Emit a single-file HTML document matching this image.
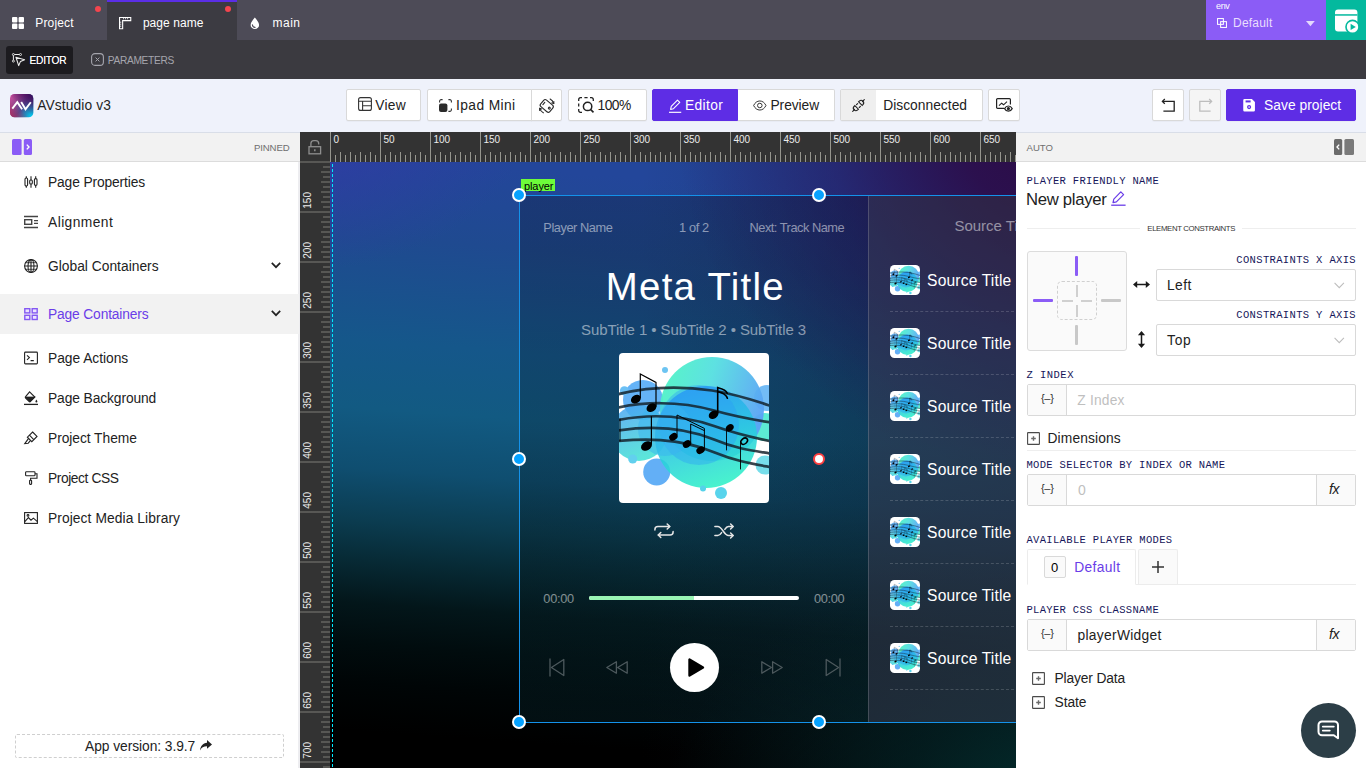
<!DOCTYPE html>
<html lang="en">
<head>
<meta charset="utf-8">
<title>AVstudio v3</title>
<style>
*{box-sizing:border-box;margin:0;padding:0}
html,body{width:1366px;height:768px;overflow:hidden;background:#fff}
body{font-family:"Liberation Sans",sans-serif;color:#222;position:relative;font-size:14px}
.abs{position:absolute}
svg{display:block;overflow:visible}
.t{position:absolute;white-space:nowrap;line-height:1}
/* ---------- top bar ---------- */
#top{position:absolute;left:0;top:0;width:1366px;height:40px;background:#4d4b57}
#top .tab{position:absolute;top:0;height:40px;color:#fff}
#top .tab.active{background:#3c3b42;border-top:2px solid #5b2ee6}
.dot{position:absolute;width:6px;height:6px;border-radius:50%;background:#f4454e}
#env{position:absolute;left:1206px;top:0;width:120px;height:40px;background:#8b5cf6;color:#fff}
#run{position:absolute;left:1326px;top:0;width:40px;height:40px;background:#04b99e}
/* ---------- second bar ---------- */
#sub{position:absolute;left:0;top:40px;width:1366px;height:39px;background:#3b3a40}
#edbtn{position:absolute;left:6px;top:6px;width:67px;height:28px;background:#1c1b1f;border-radius:3px}
/* ---------- toolbar ---------- */
#bar{position:absolute;left:0;top:79px;width:1366px;height:54px;background:#eff2fb;border-bottom:1px solid #d9dee8}
.btn{position:absolute;top:10px;height:32px;background:#fff;border:1px solid #d9d9d9;border-radius:2px;box-shadow:0 1px 1px rgba(0,0,0,.03)}
.btn.pri{background:#5e2de5;border-color:#5e2de5;color:#fff}

/* ---------- left panel ---------- */
#left{position:absolute;left:0;top:133px;width:300px;height:635px;background:#fff;box-shadow:inset -2px 0 0 #ededf0}
.phead{position:absolute;left:0;top:0;width:100%;height:29px;background:#f2f2f2;border-bottom:1px solid #dcdcdc}
.mi{position:absolute;left:0;width:299px;height:40px}
.mi .t{left:48px;top:12px;font-size:14.5px;color:#222}
.mi svg{position:absolute;left:24px;top:13px}
.mi.sel{background:#f2f2f2}
.mi.sel .t{color:#6a3de8}

/* ---------- right panel ---------- */
#right{position:absolute;left:1016px;top:133px;width:350px;height:635px;background:#fff}
.lab{position:absolute;white-space:nowrap;line-height:1;font-family:"Liberation Mono",monospace;font-size:10px;color:#16165a;letter-spacing:.55px}
.box{position:absolute;border:1px solid #d9d9d9;border-radius:2px;background:#fff}
.addon{position:absolute;top:0;height:100%;background:#fafafa}
.hl{position:absolute;height:1px;background:#eee}

/* ---------- canvas ---------- */
#cv{position:absolute;left:300px;top:132px;width:716px;height:636px;background:#333;overflow:hidden}
#rt{position:absolute;left:30px;top:0;width:700px;height:30px;
 background:
  linear-gradient(90deg,#96968e 0 1px,transparent 1px) 0 0/50px 30px repeat-x,
  linear-gradient(90deg,#96968e 0 1px,transparent 1px) 0 20px/10px 10px repeat-x,
  linear-gradient(90deg,#96968e 0 1px,transparent 1px) 5px 23px/10px 7px repeat-x}
#rl{position:absolute;left:0;top:29px;width:30px;height:620px;
 background:
  linear-gradient(180deg,rgba(142,141,134,.4) 0 2px,transparent 2px) 0 0/21px 50px repeat-y,
  linear-gradient(180deg,rgba(142,141,134,.4) 0 2px,transparent 2px) 21px 0/9px 10px repeat-y,
  linear-gradient(180deg,rgba(142,141,134,.4) 0 2px,transparent 2px) 23px 5px/7px 10px repeat-y}
.rn{position:absolute;top:3px;font-size:10px;line-height:1;color:#ececec;white-space:nowrap}
.rv{position:absolute;left:3px;width:10px;font-size:10px;line-height:1;color:#ececec;white-space:nowrap;writing-mode:vertical-rl;transform:rotate(180deg)}
#stage{position:absolute;left:30px;top:30px;width:690px;height:610px;overflow:hidden;
 background:
  radial-gradient(ellipse 58% 60% at 108% -8%,rgba(44,10,66,1) 0,rgba(44,14,76,.95) 30%,rgba(42,20,96,.5) 62%,rgba(40,24,100,0) 100%),
  radial-gradient(ellipse 60% 45% at 108% 108%,rgba(2,52,50,.95) 0,rgba(2,40,40,.6) 45%,rgba(0,30,30,0) 100%),
  radial-gradient(ellipse 34% 26% at -5% -8%,rgba(52,56,166,.85) 0,rgba(48,58,160,0) 100%),
  linear-gradient(90deg,rgba(20,24,44,0) 45%,rgba(20,24,44,.36) 100%),
  linear-gradient(184deg,#23469a 6.4%,#1f4a90 18.4%,#15578a 34.2%,#125a82 44.4%,#0f4e70 53.6%,#0b3c50 61.5%,#072a35 67.5%,#03161a 74.0%,#010c0e 80.1%,#000506 86.1%,#000 93.5%)}
#pl{position:absolute;left:190px;top:34px;width:599px;height:526px;background:linear-gradient(180deg,rgba(0,0,0,.22) 0,rgba(0,0,0,.2) 45%,rgba(4,22,28,.3) 70%,rgba(8,40,48,.36) 100%);color:#fff}
#pin{position:absolute;left:0;top:1px}
#sel{position:absolute;left:189px;top:33px;width:601px;height:528px;border:1px solid #1492ea}
.hd{position:absolute;width:14px;height:14px;border-radius:50%;background:#06a2ff;border:2px solid #fff}
.dim{color:rgba(255,255,255,.5)}
.src{position:absolute;left:370px;width:240px;height:63px;border-bottom:1px dashed rgba(255,255,255,.17)}
.src .t{left:38px;top:23px;font-size:16px;color:#fff}
.src svg{position:absolute;left:0;top:16px}
</style>
</head>
<body>
<!-- TOP BAR -->
<div id="top">
  <div class="tab" style="left:0;width:107px">
    <svg class="abs" style="left:12px;top:17px" width="12" height="12" viewBox="0 0 12 12"><g fill="#fff"><rect x="0" y="0" width="5.4" height="5.4" rx="1"/><rect x="6.6" y="0" width="5.4" height="5.4" rx="1"/><rect x="0" y="6.6" width="5.4" height="5.4" rx="1"/><rect x="6.6" y="6.6" width="5.4" height="5.4" rx="1"/></g></svg>
    <span class="t" id="t-project" style="left:35.3px;top:17.2px;font-size:12px;letter-spacing:0.16px">Project</span>
    <i class="dot" style="left:95px;top:6px"></i>
  </div>
  <div class="tab active" style="left:107px;width:130px">
    <svg class="abs" style="left:11.800px;top:15px" width="12.300" height="12.300" viewBox="0 0 12.300 12.300"><path d="M.55.55h11.200v3.100H3.650v8.100H.55z" fill="none" stroke="#fff" stroke-width="1.100"/><path d="M4.600 1v1.300M6.600 1v1.300M8.600 1v1.300M1 5.200h1.300M1 7.200h1.300M1 9.200h1.300" stroke="#fff" stroke-width=".8"/></svg>
    <span class="t" id="t-pagename" style="left:35.9px;top:15.2px;font-size:12px;letter-spacing:0.06px">page name</span>
    <i class="dot" style="left:118px;top:4px"></i>
  </div>
  <div class="tab" style="left:237px;width:100px">
    <svg class="abs" style="left:13.200px;top:16.700px" width="9.700" height="12.600" viewBox="0 0 11 14"><path d="M5.500.3C7.600 3 10.300 6 10.300 8.800a4.800 4.800 0 0 1-9.600 0C.7 6 3.400 3 5.500.3z" fill="#fff"/><path d="M2.700 8.600a3.300 3.300 0 0 0 3 3.100" fill="none" stroke="#4d4b57" stroke-width="1.300" stroke-linecap="round"/></svg>
    <span class="t" id="t-main" style="left:35.6px;top:17.2px;font-size:12px;letter-spacing:0.47px">main</span>
  </div>
  <div id="env">
    <span class="t" style="left:10px;top:2px;font-size:9px;letter-spacing:-.35px">env</span>
    <svg class="abs" style="left:11px;top:18px" width="10" height="10" viewBox="0 0 11 11"><rect x=".6" y=".6" width="6.4" height="6.4" fill="none" stroke="#fff" stroke-width="1.1"/><rect x="4" y="4" width="6.4" height="6.4" fill="none" stroke="#fff" stroke-width="1.1"/></svg>
    <span class="t" id="t-default" style="left:27.0px;top:17.2px;font-size:12px;letter-spacing:0.21px;color:#e9defe">Default</span>
    <svg class="abs" style="left:99.500px;top:20.500px" width="8.800" height="5.400" viewBox="0 0 10 6"><path d="M0 0h10L5 6z" fill="#e4d9fd"/></svg>
  </div>
  <div id="run">
    <svg class="abs" style="left:8.800px;top:8.500px" width="30" height="28" viewBox="0 0 30 28"><rect x="0" y=".5" width="22.400" height="22" rx="3" fill="#fff"/><rect x="0" y="5.200" width="22.400" height="1.500" fill="#04b99e"/><circle cx="17.500" cy="17.900" r="7.300" fill="#04b99e"/><circle cx="17.500" cy="17.900" r="5.700" fill="#fff"/><path d="M15.600 14.800v6.200l5.200-3.100z" fill="#04b99e"/></svg>
  </div>
</div>
<!-- SECOND BAR -->
<div id="sub">
  <div id="edbtn">
    <svg class="abs" style="left:6px;top:7px" width="14" height="14" viewBox="0 0 14 14"><g fill="none" stroke="#ededed" stroke-width="1" stroke-linejoin="round"><path d="M1.400 1.500h7M1.400 1.500v6.500"/><circle cx="1.400" cy="1.500" r="1" fill="#1c1b1f" stroke="#d8d8d8"/><circle cx="8.500" cy="1.500" r="1" fill="#1c1b1f" stroke="#d8d8d8"/><circle cx="1.400" cy="8.100" r="1" fill="#1c1b1f" stroke="#d8d8d8"/><path d="M3.900 4.200l8.700 2.500-4.100 1.700-1.800 4.200z" fill="#1c1b1f" stroke-width="1.100"/></g></svg>
    <span class="t" id="t-editor" style="left:23.4px;top:10.2px;font-size:10.2px;letter-spacing:-0.20px;text-shadow:0 0 .6px rgba(255,255,255,.7);color:#fff">EDITOR</span>
  </div>
  <svg class="abs" style="left:91px;top:13px" width="13" height="13" viewBox="0 0 13 13"><rect x=".6" y=".6" width="11.8" height="11.8" rx="3.4" fill="none" stroke="#a5a5ad" stroke-width="1.1"/><path d="M4.6 4.6l3.8 3.8M8.4 4.6L4.6 8.4" stroke="#a5a5ad" stroke-width="1"/></svg>
  <span class="t" id="t-params" style="left:107.7px;top:16.2px;font-size:10.2px;letter-spacing:-0.32px;color:#a5a5ad">PARAMETERS</span>
</div>
<!-- TOOLBAR -->
<div id="bar">
  <svg class="abs" style="left:10px;top:15px" width="23" height="23" viewBox="0 0 23 23"><defs><linearGradient id="lg1" x1="0" y1=".15" x2="1" y2=".85"><stop offset="0" stop-color="#c74f9c"/><stop offset=".3" stop-color="#92458c"/><stop offset=".55" stop-color="#4f4a90"/><stop offset=".8" stop-color="#1e8fc0"/><stop offset="1" stop-color="#00ccf2"/></linearGradient><linearGradient id="lg2" x1="1" y1="0" x2=".3" y2=".8"><stop offset="0" stop-color="#2a0a55"/><stop offset=".25" stop-color="#4a0a5c" stop-opacity=".8"/><stop offset=".7" stop-color="#4a0a5c" stop-opacity="0"/></linearGradient><linearGradient id="lg3" x1="0" y1="1" x2=".6" y2=".3"><stop offset="0" stop-color="#b02a58" stop-opacity=".9"/><stop offset=".6" stop-color="#b02a58" stop-opacity="0"/></linearGradient></defs><rect width="23.300" height="23.300" rx="4.600" fill="url(#lg1)"/><rect width="23.300" height="23.300" rx="4.600" fill="url(#lg2)"/><rect width="23.300" height="23.300" rx="4.600" fill="url(#lg3)"/><path d="M2.300 14.700L7.300 8.200l4.800 7" fill="none" stroke="#fff" stroke-width="1.900" stroke-linejoin="miter"/><path d="M11.200 8l4.300 7.200L20.800 8.200" fill="none" stroke="#fff" stroke-width="1.900"/></svg>
  <span class="t" id="t-avs" style="left:37.2px;top:19.9px;font-size:13.8px;letter-spacing:0.11px;color:#1f1f1f">AVstudio v3</span>

  <div class="btn" style="left:346px;width:75px">
    <svg class="abs" style="left:11px;top:7px" width="14" height="14" viewBox="0 0 14 14"><g fill="none" stroke="#333" stroke-width="1.1"><rect x=".6" y=".6" width="12.8" height="12.8" rx="2"/><path d="M.6 4.2h12.8M4.600 4.200v9.200M4.600 8.800h8.800"/></g></svg>
    <span class="t" id="t-view" style="left:28.2px;top:8.8px;font-size:13.8px;letter-spacing:0.29px">View</span>
  </div>
  <div class="btn" style="left:427px;width:105px;border-radius:2px 0 0 2px">
    <svg class="abs" style="left:11px;top:9px" width="13" height="13" viewBox="0 0 13 13"><g fill="none" stroke="#333" stroke-width="1.1"><path d="M.6 3.6V2.2A1.6 1.6 0 0 1 2.2.6h1.4M9.4.6h1.4a1.6 1.6 0 0 1 1.6 1.6v1.4M12.4 9.4v1.4a1.6 1.6 0 0 1-1.6 1.6H9.4"/></g><rect x="0" y="4.6" width="8.4" height="8.4" rx="2" fill="#2a2a2a"/></svg>
    <span class="t" id="t-ipad" style="left:28.0px;top:8.8px;font-size:13.8px;letter-spacing:0.40px">Ipad Mini</span>
  </div>
  <div class="btn" style="left:531px;width:31px;border-radius:0 2px 2px 0">
    <svg class="abs" style="left:7px;top:8px" width="16.500" height="16.500" viewBox="0.500 0.300 16 16"><g fill="none" stroke="#2b2b2b" stroke-width="1.100" stroke-linecap="round" stroke-linejoin="round"><g transform="rotate(-49.500 8 8)"><rect x="3.800" y="2.200" width="8.400" height="11.600" rx="2"/><path d="M6.600 4.300h2.800"/><circle cx="8" cy="11.300" r=".9"/></g><path d="M11.300 1.300a7.300 7.300 0 0 1 3.500 4.300"/><path d="M14.900 3.700l-.1 2-1.800-.7"/><path d="M4.700 14.700a7.300 7.300 0 0 1-3.500-4.300"/><path d="M1.100 12.300l.1-2 1.800.7"/></g></svg>
  </div>
  <div class="btn" style="left:568px;width:79px">
    <svg class="abs" style="left:9px;top:7px" width="17" height="17" viewBox="0 0 17 17"><g fill="none" stroke="#222" stroke-width="1.3"><path d="M.7 4V2.4A1.7 1.7 0 0 1 2.4.7H4M6.4.7h3.2M12 .7h1.6a1.7 1.7 0 0 1 1.7 1.7V4M.7 6.4v3.2M.7 12v1.6a1.7 1.7 0 0 0 1.7 1.7H4" /><circle cx="9.6" cy="9.4" r="4.2" stroke-width="1.5"/><path d="M12.7 12.6l2.8 2.8" stroke-width="1.6"/></g></svg>
    <span class="t" id="t-100" style="left:28.5px;top:8.8px;font-size:13.8px;letter-spacing:-0.53px">100%</span>
  </div>
  <div class="btn pri" style="left:652px;width:86px;border-radius:2px 0 0 2px">
    <svg class="abs" style="left:16px;top:8.500px" width="12.600" height="14.400" viewBox="0 0 14 16"><g fill="none" stroke="#fff" stroke-width="1.2" stroke-linejoin="round"><path d="M9.4 1.2l2.6 2.6-7 7-3.2.8.7-3.3z"/><path d="M0 14.8h13.6" stroke-width="1.3"/></g></svg>
    <span class="t" id="t-editor2" style="left:31.9px;top:8.8px;font-size:13.8px;letter-spacing:0.39px;color:#fff">Editor</span>
  </div>
  <div class="btn" style="left:738px;width:97px;border-radius:0 2px 2px 0;border-left:0">
    <svg class="abs" style="left:15.200px;top:9.500px" width="13.600" height="11" viewBox="0 0 15 12"><g fill="none" stroke="#333" stroke-width="1.1"><path d="M.7 6C2.2 2.8 4.6 1 7.5 1s5.300 1.800 6.800 5c-1.500 3.200-3.900 5-6.800 5S2.200 9.200.7 6z"/><circle cx="7.500" cy="6" r="2.500"/></g></svg>
    <span class="t" id="t-preview" style="left:32.5px;top:8.8px;font-size:13.8px;letter-spacing:-0.08px">Preview</span>
  </div>
  <div class="btn" style="left:840px;width:143px"></div>
  <div class="abs" style="left:841px;top:11px;width:35px;height:30px;background:#efefef"></div>
  <svg class="abs" style="left:851.500px;top:19.500px" width="13" height="13" viewBox="0 0 15 15"><g fill="none" stroke="#222" stroke-width="1.3" stroke-linecap="round"><path d="M.8 14.200l2.200-2.200M12 3l2.200-2.200"/><path d="M3.300 7.600l4.100 4.100-.9.900a2.900 2.900 0 0 1-4.100-4.100z" /><path d="M11.700 7.400L7.600 3.300l.9-.9a2.900 2.900 0 0 1 4.100 4.100z"/><path d="M5.200 6.600l1.300-1.300M8.400 9.800l1.300-1.300"/></g></svg>
  <span class="t" id="t-disc" style="left:883.2px;top:19.9px;font-size:13.8px;letter-spacing:0.02px">Disconnected</span>
  <div class="btn" style="left:988px;width:32px">
    <svg class="abs" style="left:7px;top:8px" width="17" height="14" viewBox="0 0 17 14"><g fill="none" stroke="#222" stroke-width="1.2"><path d="M8 10.400H1.600a1 1 0 0 1-1-1V1.600a1 1 0 0 1 1-1h11.800a1 1 0 0 1 1 1v5"/><path d="M3 7.600l2.600-2.400 2 1.600 3.400-3.200" stroke-width="1.100"/><path d="M8.600 10.600c.9-1.700 2.200-2.600 3.800-2.600s2.900.9 3.800 2.600c-.9 1.700-2.200 2.600-3.800 2.600s-2.900-.9-3.800-2.600z" fill="#fff"/><circle cx="12.400" cy="10.600" r="1" fill="#222"/></g></svg>
  </div>
  <div class="btn" style="left:1152px;width:32px">
    <svg class="abs" style="left:8px;top:8px" width="15" height="14" viewBox="0 0 15 14"><g fill="none" stroke="#222" stroke-width="1.3"><path d="M1.400 3.400h11.800v9.800H2.400"/><path d="M3.800 1l-2.400 2.400 2.400 2.400" /></g></svg>
  </div>
  <div class="btn" style="left:1189px;width:32px;background:#f5f5f5">
    <svg class="abs" style="left:8px;top:8px" width="15" height="14" viewBox="0 0 15 14"><g fill="none" stroke="#bdbdbd" stroke-width="1.3"><path d="M13.600 3.400H1.800v9.800h10.800"/><path d="M11.200 1l2.400 2.400-2.400 2.400"/></g></svg>
  </div>
  <div class="btn pri" style="left:1226px;width:130px">
    <svg class="abs" style="left:16px;top:9px" width="12.200" height="12.600" viewBox="0 0 13 14"><path d="M1.400 0h8.200L13 3.400v9.200a1.400 1.400 0 0 1-1.400 1.400H1.400A1.400 1.400 0 0 1 0 12.600V1.400A1.400 1.400 0 0 1 1.400 0z" fill="#fff"/><rect x="2.600" y="1.600" width="5.600" height="2.200" fill="#5e2de5"/><circle cx="6.500" cy="9" r="2.300" fill="#5e2de5"/><circle cx="6.500" cy="9" r=".9" fill="#fff"/></svg>
    <span class="t" id="t-save" style="left:37.0px;top:8.8px;font-size:13.8px;letter-spacing:0.04px;color:#fff">Save project</span>
  </div>
</div>
<div id="left">
  <div class="phead">
    <svg class="abs" style="left:12px;top:6px" width="20" height="16" viewBox="0 0 20 16"><rect x="0" y="0" width="9.600" height="16" rx="1.500" fill="#8b5cf6"/><rect x="11.800" y="0" width="8.200" height="16" rx="1.500" fill="#8b5cf6"/><path d="M14.800 5.600L17 8l-2.200 2.400" fill="none" stroke="#fff" stroke-width="1.400"/></svg>
    <span class="t" id="t-pinned" style="left:253.9px;top:10.0px;font-size:9.6px;letter-spacing:-0.10px;color:#6f6f6f">PINNED</span>
  </div>
  <div class="mi" style="top:29px"><svg width="14" height="14" viewBox="0 0 14 14" ><g fill="none" stroke="#222" stroke-width="1.1"><rect x="1" y="3" width="2.600" height="8" rx="1.200"/><rect x="5.700" y="5" width="2.600" height="4" rx="1"/><rect x="10.400" y="3.600" width="2.600" height="6.800" rx="1.200"/><path d="M2.300 1.200v1.800M2.300 11v1.800M7 1.200v3.800M7 9v3.800M11.700 1.200v2.400M11.700 10.400v2.400"/></g></svg><span class="t" id="t-m1" style="left:48.0px;top:13.8px;font-size:13.8px;letter-spacing:-0.13px">Page Properties</span></div>
  <div class="mi" style="top:69px"><svg width="14" height="14" viewBox="0 0 14 14" ><g fill="none" stroke="#222" stroke-width="1.1"><g stroke="#444" stroke-width="1.400"><path d="M0 1.500h14M0 12.500h14M10 5.600H14M10 8.400H14"/><rect x=".7" y="4.700" width="7" height="4.600"/></g></g></svg><span class="t" id="t-m2" style="left:48.0px;top:13.8px;font-size:13.8px;letter-spacing:0.43px">Alignment</span></div>
  <div class="mi" style="top:113px"><svg width="14" height="14" viewBox="0 0 14 14" ><g fill="none" stroke="#222" stroke-width="1.1"><circle cx="7" cy="7" r="6.400"/><ellipse cx="7" cy="7" rx="3" ry="6.400"/><path d="M7 .6v12.800M.6 7h12.800" /><path d="M1.600 3.700h10.800M1.600 10.300h10.800" stroke-width=".8"/></g></svg><svg style="left:271px;top:16px" width="10" height="7" viewBox="0 0 10 7"><path d="M.8.900L5 5.200 9.200.900" fill="none" stroke="#222" stroke-width="1.700"/></svg><span class="t" id="t-m3" style="left:48.0px;top:13.8px;font-size:13.8px;letter-spacing:0.01px">Global Containers</span></div>
  <div class="mi sel" style="top:161px"><svg width="14" height="14" viewBox="0 0 14 14" ><g fill="#ece4ff" stroke="#8458f3" stroke-width="1.400"><rect x=".8" y="1.700" width="5" height="4.200"/><rect x="8.200" y="1.700" width="5" height="4.200"/><rect x=".8" y="8.300" width="5" height="4.200"/><rect x="8.200" y="8.300" width="5" height="4.200"/></g></svg><svg style="left:271px;top:16px" width="10" height="7" viewBox="0 0 10 7"><path d="M.8.900L5 5.200 9.200.900" fill="none" stroke="#222" stroke-width="1.700"/></svg><span class="t" id="t-m4" style="left:48.0px;top:13.8px;font-size:13.8px;letter-spacing:-0.15px">Page Containers</span></div>
  <div class="mi" style="top:205px"><svg width="14" height="14" viewBox="0 0 14 14" ><g fill="none" stroke="#222" stroke-width="1.1"><rect x=".6" y="1.100" width="12.800" height="11.800" rx=".8"/><path d="M3 4.400l2.400 2.200L3 8.800M6.600 9.600h3.200"/></g></svg><span class="t" id="t-m5" style="left:48.0px;top:13.8px;font-size:13.8px;letter-spacing:-0.03px">Page Actions</span></div>
  <div class="mi" style="top:245px"><svg width="14" height="14" viewBox="0 0 14 14" ><g fill="none" stroke="#222" stroke-width="1.1"><path d="M5.600 .8l5.200 5.200-4.400 4.400a1 1 0 0 1-1.400 0L1.600 7a1 1 0 0 1 0-1.400z" /><path d="M1.500 6.400h9" /><path d="M2 6.400h8.400L6 10.800z" fill="#222"/><path d="M12.400 8.400c.6 1 1 1.600 1 2.100a1 1 0 0 1-2 0c0-.5.400-1.100 1-2.100z" fill="#222" stroke="none"/><path d="M0 13.400h14" stroke-width="1.300"/></g></svg><span class="t" id="t-m6" style="left:48.0px;top:13.8px;font-size:13.8px;letter-spacing:-0.10px">Page Background</span></div>
  <div class="mi" style="top:285px"><svg width="14" height="14" viewBox="0 0 14 14" ><g fill="none" stroke="#222" stroke-width="1.1"><path d="M8.600 1l4.400 4.400-5.200 5.200-4.400-4.400z"/><path d="M5.400 4.200l4.400 4.400"/><path d="M4.600 7.400L.8 12.600l3.400-.4 2.400-2.800"/></g></svg><span class="t" id="t-m7" style="left:48.0px;top:13.8px;font-size:13.8px;letter-spacing:-0.05px">Project Theme</span></div>
  <div class="mi" style="top:325px"><svg width="14" height="14" viewBox="0 0 14 14" ><g fill="none" stroke="#222" stroke-width="1.1"><rect x="1.600" y=".8" width="9.400" height="4" rx=".8"/><path d="M11 2.800h2v4.400H6.600v2"/><rect x="5.600" y="9.200" width="2" height="4.200" rx=".6"/></g></svg><span class="t" id="t-m8" style="left:48.0px;top:13.8px;font-size:13.8px;letter-spacing:-0.42px">Project CSS</span></div>
  <div class="mi" style="top:365px"><svg width="14" height="14" viewBox="0 0 14 14" ><g fill="none" stroke="#222" stroke-width="1.1"><rect x=".6" y="1.600" width="12.800" height="10.800"/><path d="M.8 10.600l3.600-4 2.600 2.600 2.400-2 4 3.400"/><circle cx="4" cy="4.400" r=".9"/></g></svg><span class="t" id="t-m9" style="left:48.0px;top:13.8px;font-size:13.8px;letter-spacing:0.08px">Project Media Library</span></div>
  <div class="abs" style="left:15px;top:601px;width:269px;height:24px;border:1px dashed #cfcfcf;border-radius:2px"></div>
  <span class="t" id="t-appv" style="left:85.1px;top:607.0px;font-size:13.8px;letter-spacing:-0.06px;color:#222">App version: 3.9.7</span>
  <svg class="abs" style="left:200px;top:607px" width="12" height="11" viewBox="0 0 12 11"><path d="M7 0l5 4.400-5 4.400V6.200C3.600 6.200 1.400 7.400 0 10.600.4 6.200 2.800 3.200 7 2.700z" fill="#222"/></svg>
</div>
<div id="cv">
  <svg width="0" height="0" style="position:absolute"><clipPath id="tc"><rect width="30" height="30" rx="4.500"/></clipPath><symbol id="art" viewBox="0 0 150 150">
<defs><linearGradient id="ga" x1="0" y1=".2" x2="1" y2=".5"><stop offset="0" stop-color="#4ff5c4"/><stop offset=".45" stop-color="#55dfe0"/><stop offset="1" stop-color="#5aa2f6"/></linearGradient>
<linearGradient id="gb" x1=".3" y1="0" x2=".6" y2="1"><stop offset="0" stop-color="#2b98f4"/><stop offset=".5" stop-color="#27c6e2"/><stop offset="1" stop-color="#30f2c6"/></linearGradient>
<linearGradient id="gc" x1="0" y1="0" x2=".4" y2="1"><stop offset="0" stop-color="#4a9ef6"/><stop offset="1" stop-color="#3fe0d4"/></linearGradient>
<clipPath id="ac"><rect width="150" height="150" rx="4"/></clipPath></defs>
<rect width="150" height="150" rx="4" fill="#fff"/>
<g clip-path="url(#ac)">
<circle cx="24" cy="47" r="20" fill="#4aa6f6" opacity=".85"/>
<circle cx="20" cy="80" r="28" fill="url(#gc)" opacity=".85"/>
<circle cx="37.700" cy="119" r="13.500" fill="#52a6f5" opacity=".9"/>
<circle cx="148" cy="45" r="13" fill="#5ab0f5" opacity=".85"/>
<circle cx="146" cy="74" r="14" fill="#3fe8cc" opacity=".85"/>
<circle cx="146" cy="112" r="9.500" fill="#5fd8e8" opacity=".85"/>
<circle cx="93" cy="56" r="52" fill="url(#ga)" opacity=".95"/>
<circle cx="87" cy="84" r="51" fill="url(#gb)" opacity=".88"/>
<circle cx="80" cy="72" r="40" fill="#2a9af6" opacity=".38"/>
<circle cx="46" cy="76" r="27" fill="#39b4f0" opacity=".5"/>
<circle cx="5.400" cy="37.700" r="4.500" fill="#6cc0f5"/><circle cx="46" cy="17" r="3" fill="#6cc4f2"/><circle cx="13.700" cy="106" r="4.500" fill="#62d0ee"/><circle cx="84" cy="135.600" r="3" fill="#55d2ea"/><circle cx="102" cy="140" r="6" fill="#58d4ec"/>
<g fill="none" stroke="#14222c" stroke-width="2.700" opacity=".84"><path d="M-2 41.500C22 35.500 56 32 93 37.500c22 3.300 40 9 59 15.500"/><path d="M-2 54.800C22 49.500 58 47 95 57.500c22 6.200 38 9 57 12"/><path d="M-2 67.200C22 62.500 58 60 95 73c22 7.700 38 11.500 57 15.200"/><path d="M-2 77.600C22 74 58 71 95 86.600c22 9.200 38 11 57 14"/><path d="M-2 88C22 86 58 84 95 99.200c22 9 38 11.500 57 15"/></g>
<g fill="#000" stroke="#000" stroke-linecap="round">
<ellipse cx="16.900" cy="46.200" rx="5.300" ry="4" transform="rotate(-32 16.900 46.200)" stroke="none"/><ellipse cx="32.500" cy="54.600" rx="5.300" ry="4" transform="rotate(-32 32.500 54.600)" stroke="none"/>
<path d="M21.300 44.500V21l15.700 8.400v23.800" fill="none" stroke-width="1.200"/>
<ellipse cx="27.500" cy="93" rx="5.800" ry="4.300" transform="rotate(-30 27.500 93)" stroke="none"/><path d="M32.400 91V63.500" fill="none" stroke-width="1.200"/>
<path d="M1 66v22" fill="none" stroke-width="1"/>
<ellipse cx="54.400" cy="83.800" rx="4.500" ry="3.400" transform="rotate(-32 54.400 83.800)" stroke="none"/><ellipse cx="68" cy="91" rx="4.500" ry="3.400" transform="rotate(-32 68 91)" stroke="none"/><ellipse cx="81.600" cy="97.200" rx="4.500" ry="3.400" transform="rotate(-32 81.600 97.200)" stroke="none"/>
<path d="M58 82V62l27.400 13.400V95.500" fill="none" stroke-width="1"/><path d="M71.700 89.500V71l13.600 6.600" fill="none" stroke-width="1"/>
<ellipse cx="94.600" cy="61.700" rx="5.200" ry="3.900" transform="rotate(-32 94.600 61.700)" stroke="none"/>
<path d="M98.700 60V34.600c3 .8 8.300 2 9.500 5.600M98.700 38.500c3 .8 8.300 2.200 9.700 6.800" fill="none" stroke-width="1.600"/>
<ellipse cx="110.800" cy="74.800" rx="4.200" ry="3.300" transform="rotate(-40 110.800 74.800)" stroke="none"/><path d="M107.500 76.500V97" fill="none" stroke-width=".9"/>
<ellipse cx="125.200" cy="88.200" rx="3.700" ry="2.700" transform="rotate(-40 125.200 88.200)" fill="none" stroke-width="1.500"/><path d="M121.500 90v26" fill="none" stroke-width=".9"/>
</g></g></symbol></svg>
  <div id="rt"><span class="rn" style="left:3.5px">0</span><span class="rn" style="left:53.5px">50</span><span class="rn" style="left:103.5px">100</span><span class="rn" style="left:153.5px">150</span><span class="rn" style="left:203.5px">200</span><span class="rn" style="left:253.5px">250</span><span class="rn" style="left:303.5px">300</span><span class="rn" style="left:353.5px">350</span><span class="rn" style="left:403.5px">400</span><span class="rn" style="left:453.5px">450</span><span class="rn" style="left:503.5px">500</span><span class="rn" style="left:553.5px">550</span><span class="rn" style="left:603.5px">600</span><span class="rn" style="left:653.5px">650</span></div>
  <div id="rl"><span class="rv" style="top:30.8px">150</span><span class="rv" style="top:80.8px">200</span><span class="rv" style="top:130.8px">250</span><span class="rv" style="top:180.8px">300</span><span class="rv" style="top:230.8px">350</span><span class="rv" style="top:280.8px">400</span><span class="rv" style="top:330.8px">450</span><span class="rv" style="top:380.8px">500</span><span class="rv" style="top:430.8px">550</span><span class="rv" style="top:480.8px">600</span><span class="rv" style="top:530.8px">650</span><span class="rv" style="top:580.8px">700</span><span class="rv" style="top:630.8px">750</span></div>
  <svg class="abs" style="left:8px;top:8px" width="13.500" height="14.500" viewBox="0 0 13.500 14.500"><g fill="none" stroke="#8f8f8f" stroke-width="1.300"><rect x="1" y="6.700" width="11.600" height="7.100"/><path d="M2.900 6.700V3.600A2.900 2.900 0 0 1 5.800.7h2a2.900 2.900 0 0 1 2.900 2.900v1"/><path d="M6.800 9.300v1.900" stroke-width="1.500"/></g></svg>
  <div id="stage">
    <div class="abs" style="left:2px;top:2px;width:1px;height:100%;background:repeating-linear-gradient(180deg,#00eaff 0 3px,transparent 3px 5px)"></div>
    <div id="pl">
      <div class="abs" style="left:348px;top:0;width:251px;height:526px;background:rgba(62,62,84,.45);border-left:1px solid rgba(255,255,255,.17)"></div>
      <div id="pin">
      <span class="t dim" id="c-pn" style="left:23.3px;top:25.0px;font-size:12.8px;letter-spacing:-0.44px">Player Name</span>
      <span class="t dim" id="c-1of2" style="left:159.0px;top:25.0px;font-size:12.8px;letter-spacing:-0.38px">1 of 2</span>
      <span class="t dim" id="c-next" style="left:229.5px;top:25.0px;font-size:12.8px;letter-spacing:-0.49px">Next: Track Name</span>
      <span class="t" id="c-meta" style="left:85.8px;top:71.0px;font-size:38.4px;letter-spacing:1.26px;color:#fff">Meta Title</span>
      <span class="t dim" id="c-sub" style="left:61.1px;top:125.0px;font-size:15px;letter-spacing:-0.09px">SubTitle 1 • SubTitle 2 • SubTitle 3</span>
      <svg class="abs" style="left:99px;top:156px" width="150" height="150" viewBox="0 0 150 150"><use href="#art" width="150" height="150"/></svg>
      <svg class="abs" style="left:134px;top:326px" width="20" height="16" viewBox="0 0 20 16"><g fill="none" stroke="#e6e6e6" stroke-width="1.500" stroke-linecap="round" stroke-linejoin="round"><path d="M.9 7V6.500a3 3 0 0 1 3-3h11.700"/><path d="M13.200 1l2.600 2.500-2.600 2.500"/><path d="M19.100 8.500V9a3 3 0 0 1-3 3H4.400"/><path d="M6.800 9.500L4.200 12l2.600 2.500"/></g></svg>
      <svg class="abs" style="left:194px;top:326px" width="20" height="16" viewBox="0 0 20 16"><g fill="none" stroke="#e6e6e6" stroke-width="1.500" stroke-linecap="round" stroke-linejoin="round"><path d="M.9 3.500h2.800c4.600 0 6.200 9 10.800 9h4.300"/><path d="M.9 12.500h2.800c1.700 0 2.900-1.300 3.900-2.900M10.800 6.400c1-1.600 2.200-2.900 3.700-2.900h4.300"/><path d="M16.600 1l2.600 2.500-2.600 2.500M16.600 10l2.600 2.500-2.600 2.500"/></g></svg>
      <span class="t dim" id="c-t1" style="left:23.3px;top:395.8px;font-size:12.8px;letter-spacing:-0.28px">00:00</span>
      <div class="abs" style="left:69px;top:399px;width:210px;height:4px;border-radius:2px;background:#fff"></div>
      <div class="abs" style="left:69px;top:399px;width:105px;height:4px;border-radius:2px 0 0 2px;background:#9af5b4"></div>
      <span class="t dim" id="c-t2" style="left:293.9px;top:395.8px;font-size:12.8px;letter-spacing:-0.31px">00:00</span>
      <svg class="abs" style="left:29px;top:461px" width="16" height="19" viewBox="0 0 16 19"><g fill="none" stroke="#4d595d" stroke-width="1.300" stroke-linejoin="round"><path d="M1 .5v18"/><path d="M14.800 1.500v16L2.400 9.500z"/></g></svg>
      <svg class="abs" style="left:86px;top:464px" width="22" height="13" viewBox="0 0 22 13"><g fill="none" stroke="#4d595d" stroke-width="1.300" stroke-linejoin="round"><path d="M10.400 .8v11.400L.8 6.500z"/><path d="M21.200 .8v11.400L11.600 6.500z"/></g></svg>
      <div class="abs" style="left:150px;top:446px;width:49px;height:49px;border-radius:50%;background:#fff"></div>
      <svg class="abs" style="left:168px;top:461px" width="17" height="19" viewBox="0 0 17 19"><path d="M1.500 1.500v16L15 9.500z" fill="#000" stroke="#000" stroke-width="2.400" stroke-linejoin="round"/></svg>
      <svg class="abs" style="left:241px;top:464px" width="22" height="13" viewBox="0 0 22 13"><g fill="none" stroke="#4d595d" stroke-width="1.300" stroke-linejoin="round"><path d="M.8 .8v11.400l9.600-5.700z"/><path d="M11.600 .8v11.400l9.600-5.700z"/></g></svg>
      <svg class="abs" style="left:305px;top:461px" width="16" height="19" viewBox="0 0 16 19"><g fill="none" stroke="#4d595d" stroke-width="1.300" stroke-linejoin="round"><path d="M15 .5v18"/><path d="M1.200 1.500v16l12.400-8z"/></g></svg>
      <span class="t dim" id="c-srch" style="left:434.4px;top:21.2px;font-size:15px;letter-spacing:0.00px">Source Title</span>
      <div class="src" style="top:52px"><svg width="30" height="30" viewBox="0 0 30 30"><g clip-path="url(#tc)"><use href="#art" width="30" height="30"/></g></svg><span class="t" id="c-s0" style="left:37.1px;top:23.9px;font-size:15.6px;letter-spacing:0.16px">Source Title</span></div><div class="src" style="top:115px"><svg width="30" height="30" viewBox="0 0 30 30"><g clip-path="url(#tc)"><use href="#art" width="30" height="30"/></g></svg><span class="t" id="c-s1" style="left:37.1px;top:23.9px;font-size:15.6px;letter-spacing:0.16px">Source Title</span></div><div class="src" style="top:178px"><svg width="30" height="30" viewBox="0 0 30 30"><g clip-path="url(#tc)"><use href="#art" width="30" height="30"/></g></svg><span class="t" id="c-s2" style="left:37.1px;top:23.9px;font-size:15.6px;letter-spacing:0.16px">Source Title</span></div><div class="src" style="top:241px"><svg width="30" height="30" viewBox="0 0 30 30"><g clip-path="url(#tc)"><use href="#art" width="30" height="30"/></g></svg><span class="t" id="c-s3" style="left:37.1px;top:23.9px;font-size:15.6px;letter-spacing:0.16px">Source Title</span></div><div class="src" style="top:304px"><svg width="30" height="30" viewBox="0 0 30 30"><g clip-path="url(#tc)"><use href="#art" width="30" height="30"/></g></svg><span class="t" id="c-s4" style="left:37.1px;top:23.9px;font-size:15.6px;letter-spacing:0.16px">Source Title</span></div><div class="src" style="top:367px"><svg width="30" height="30" viewBox="0 0 30 30"><g clip-path="url(#tc)"><use href="#art" width="30" height="30"/></g></svg><span class="t" id="c-s5" style="left:37.1px;top:23.9px;font-size:15.6px;letter-spacing:0.16px">Source Title</span></div><div class="src" style="top:430px"><svg width="30" height="30" viewBox="0 0 30 30"><g clip-path="url(#tc)"><use href="#art" width="30" height="30"/></g></svg><span class="t" id="c-s6" style="left:37.1px;top:23.9px;font-size:15.6px;letter-spacing:0.16px">Source Title</span></div>
    </div>
    </div>
    <div id="sel"></div>
    <span class="t" id="c-lab" style="left:191px;top:17px;height:12px;padding:0 0 0 3px;width:34px;background:#6dfc3a;color:#000;font-size:11px;line-height:14px;letter-spacing:-.1px">player</span>
    <i class="hd" style="left:182px;top:26px"></i>
    <i class="hd" style="left:482px;top:26px"></i>
    <i class="hd" style="left:182px;top:290px"></i>
    <i class="hd" style="left:182px;top:553px"></i>
    <i class="hd" style="left:482px;top:553px"></i>
    <i class="abs" style="left:483px;top:291px;width:12px;height:12px;border-radius:50%;background:#fff;border:2px solid #ff3f40"></i>
  </div>
</div>
<div id="right">
  <div class="phead">
    <span class="t" id="t-auto" style="left:10.5px;top:10.0px;font-size:9.6px;letter-spacing:0.02px;color:#6f6f6f">AUTO</span>
    <svg class="abs" style="left:318px;top:6px" width="20" height="16" viewBox="0 0 20 16"><rect x="0" y="0" width="8.200" height="16" rx="1.500" fill="#6b6b6b"/><rect x="10.400" y="0" width="9.600" height="16" rx="1.500" fill="#7a7a7a"/><path d="M5.200 5.600L3 8l2.200 2.400" fill="none" stroke="#fff" stroke-width="1.400"/></svg>
  </div>
  <span class="lab" id="l-pfn" style="left:10.4px;top:43.4px;font-size:10.5px;letter-spacing:0.33px">PLAYER FRIENDLY NAME</span>
  <span class="t" id="t-newp" style="left:10.1px;top:58.9px;font-size:16.7px;letter-spacing:-0.32px;color:#222">New player</span>
  <svg class="abs" style="left:94.700px;top:58px" width="15" height="15" viewBox="0 0 15 15"><g fill="none" stroke="#6a3de8" stroke-width="1.200" stroke-linejoin="round"><path d="M9.800.8l2.800 2.800-7.200 7.200-3.400.8.800-3.400z"/><path d="M.2 14.200h14.400" stroke-width="1.300"/></g></svg>
  <div class="hl" style="left:11px;top:95px;width:113px"></div>
  <div class="hl" style="left:226px;top:95px;width:114px"></div>
  <span class="t" id="t-elc" style="left:131.3px;top:92.1px;font-size:7.8px;letter-spacing:-0.37px;color:#333">ELEMENT CONSTRAINTS</span>

  <div class="box" style="left:11px;top:118px;width:100px;height:100px;background:#fafafa;border-color:#dcdcdc;border-radius:3px">
    <div class="abs" style="left:47px;top:4px;width:3px;height:20px;background:#8b5cf6;border-radius:1px"></div>
    <div class="abs" style="left:5px;top:47px;width:20px;height:3px;background:#8b5cf6;border-radius:1px"></div>
    <div class="abs" style="left:73px;top:47px;width:20px;height:3px;background:#c8c8c8;border-radius:1px"></div>
    <div class="abs" style="left:47px;top:73px;width:3px;height:20px;background:#c8c8c8;border-radius:1px"></div>
    <div class="abs" style="left:29px;top:29px;width:40px;height:39px;border:1px dashed #d0d0d0;border-radius:5px"></div>
    <div class="abs" style="left:48px;top:33px;width:2px;height:12px;background:#d0d0d0"></div>
    <div class="abs" style="left:48px;top:53px;width:2px;height:12px;background:#d0d0d0"></div>
    <div class="abs" style="left:34px;top:48px;width:11px;height:2px;background:#d0d0d0"></div>
    <div class="abs" style="left:53px;top:48px;width:11px;height:2px;background:#d0d0d0"></div>
  </div>
  <span class="lab" id="l-cx" style="left:220.3px;top:121.7px;font-size:10.5px;letter-spacing:0.35px">CONSTRAINTS X AXIS</span>
  <svg class="abs" style="left:117px;top:147px" width="17" height="9" viewBox="0 0 17 9"><path d="M0 4.500L4.200.900v2.850h8.600V.900L17 4.500l-4.200 3.600V5.250H4.200v2.850z" fill="#1a1a1a"/></svg>
  <div class="box" style="left:140px;top:136px;width:200px;height:32px">
    <span class="t" id="t-left" style="left:10.0px;top:9.2px;font-size:13.8px;letter-spacing:0.40px;color:#222">Left</span><svg class="abs" style="left:176.500px;top:12px" width="10.500" height="7" viewBox="0 0 11 7"><path d="M.6.700L5.500 5.800 10.400.700" fill="none" stroke="#bdbdbd" stroke-width="1.100"/></svg>
  </div>
  <span class="lab" id="l-cy" style="left:220.3px;top:176.8px;font-size:10.5px;letter-spacing:0.35px">CONSTRAINTS Y AXIS</span>
  <svg class="abs" style="left:121px;top:198px" width="9" height="17" viewBox="0 0 9 17"><path d="M4.500 0L.900 4.200h2.850v8.600H.900L4.500 17l3.600-4.200H5.250V4.200h2.850z" fill="#1a1a1a"/></svg>
  <div class="box" style="left:140px;top:191px;width:200px;height:32px">
    <span class="t" id="t-top" style="left:10.0px;top:9.0px;font-size:13.8px;letter-spacing:0.73px;color:#222">Top</span><svg class="abs" style="left:176.500px;top:12px" width="10.500" height="7" viewBox="0 0 11 7"><path d="M.6.700L5.500 5.800 10.400.700" fill="none" stroke="#bdbdbd" stroke-width="1.100"/></svg>
  </div>

  <span class="lab" id="l-z" style="left:10.4px;top:236.5px;font-size:10.5px;letter-spacing:0.49px">Z INDEX</span>
  <div class="box" style="left:11px;top:251px;width:329px;height:32px">
    <div class="addon" style="left:0;width:39px;border-right:1px solid #d9d9d9"><span class="t" style="left:13px;top:8px;font-size:11px;color:#333;letter-spacing:-.3px">{&#8211;}</span></div>
    <span class="t" id="t-zi" style="left:49.2px;top:8.8px;font-size:13.8px;letter-spacing:0.22px;color:#bfbfbf">Z Index</span>
  </div>

  <svg class="abs" style="left:11px;top:299px" width="13" height="13" viewBox="0 0 13 13"><g fill="none" stroke="#4a4a4a" stroke-width="1.100"><rect x=".6" y=".6" width="11.800" height="11.800" rx=".5"/><path d="M6.500 4.200v4.600M4.200 6.500h4.600" stroke="#6a6a6a" stroke-width="1.400"/></g></svg>
  <span class="t" id="t-dim" style="left:31.5px;top:299.0px;font-size:13.8px;letter-spacing:0.12px;color:#222">Dimensions</span>
  <div class="hl" style="left:11px;top:317px;width:329px"></div>

  <span class="lab" id="l-ms" style="left:10.4px;top:326.9px;font-size:10.5px;letter-spacing:0.33px">MODE SELECTOR BY INDEX OR NAME</span>
  <div class="box" style="left:11px;top:341px;width:329px;height:32px">
    <div class="addon" style="left:0;width:39px;border-right:1px solid #d9d9d9"><span class="t" style="left:13px;top:8px;font-size:11px;color:#333;letter-spacing:-.3px">{&#8211;}</span></div>
    <span class="t" style="left:50px;top:8px;font-size:14px;color:#bfbfbf">0</span>
    <div class="addon" style="left:288px;width:39px;border-left:1px solid #d9d9d9"><span class="t" style="left:12px;top:7px;font-size:14px;font-style:italic;color:#222;letter-spacing:-.5px">fx</span></div>
  </div>

  <span class="lab" id="l-apm" style="left:10.4px;top:401.7px;font-size:10.5px;letter-spacing:0.34px">AVAILABLE PLAYER MODES</span>
  <div class="hl" style="left:11px;top:451px;width:329px;background:#ececec"></div>
  <div class="abs" style="left:11px;top:416px;width:109px;height:36px;border:1px solid #ececec;border-bottom-color:#fff;border-radius:2px 2px 0 0;background:#fff"></div>
  <div class="abs" style="left:28px;top:423px;width:22px;height:22px;border:1px solid #d9d9d9;border-radius:2px;background:#fafafa"></div>
  <span class="t" style="left:35px;top:428px;font-size:13px;color:#000">0</span>
  <span class="t" id="t-def2" style="left:58.2px;top:428.0px;font-size:13.8px;letter-spacing:0.35px;color:#6a3de8">Default</span>
  <div class="abs" style="left:122px;top:416px;width:40px;height:35px;border:1px solid #ececec;border-bottom:0;border-radius:2px 2px 0 0;background:#fafafa"></div>
  <svg class="abs" style="left:136px;top:428px" width="12" height="12" viewBox="0 0 12 12"><path d="M6 0v12M0 6h12" stroke="#333" stroke-width="1.500"/></svg>

  <span class="lab" id="l-pcc" style="left:10.4px;top:472.0px;font-size:10.5px;letter-spacing:0.33px">PLAYER CSS CLASSNAME</span>
  <div class="box" style="left:11px;top:486px;width:329px;height:32px">
    <div class="addon" style="left:0;width:39px;border-right:1px solid #d9d9d9"><span class="t" style="left:13px;top:8px;font-size:11px;color:#333;letter-spacing:-.3px">{&#8211;}</span></div>
    <span class="t" id="t-pw" style="left:49.5px;top:8.5px;font-size:13.8px;letter-spacing:0.30px;color:#222">playerWidget</span>
    <div class="addon" style="left:288px;width:39px;border-left:1px solid #d9d9d9"><span class="t" style="left:12px;top:7px;font-size:14px;font-style:italic;color:#222;letter-spacing:-.5px">fx</span></div>
  </div>

  <svg class="abs" style="left:16px;top:539px" width="13" height="13" viewBox="0 0 13 13"><g fill="none" stroke="#4a4a4a" stroke-width="1.100"><rect x=".6" y=".6" width="11.800" height="11.800" rx=".5"/><path d="M6.500 4.200v4.600M4.200 6.500h4.600" stroke="#6a6a6a" stroke-width="1.400"/></g></svg>
  <span class="t" id="t-pd" style="left:38.5px;top:538.5px;font-size:13.8px;letter-spacing:-0.15px;color:#222">Player Data</span>
  <svg class="abs" style="left:16px;top:563px" width="13" height="13" viewBox="0 0 13 13"><g fill="none" stroke="#4a4a4a" stroke-width="1.100"><rect x=".6" y=".6" width="11.800" height="11.800" rx=".5"/><path d="M6.500 4.200v4.600M4.200 6.500h4.600" stroke="#6a6a6a" stroke-width="1.400"/></g></svg>
  <span class="t" id="t-st" style="left:38.5px;top:562.5px;font-size:13.8px;letter-spacing:-0.05px;color:#222">State</span>

  <div class="abs" style="left:285px;top:570px;width:55px;height:55px;border-radius:50%;background:#2c3e47"></div>
  <svg class="abs" style="left:301px;top:587px" width="22" height="20" viewBox="0 0 22 20"><path d="M5 1.500h12.500a3.500 3.500 0 0 1 3.500 3.500v13.300l-4.200-3H5a3.500 3.500 0 0 1-3.500-3.500V5A3.500 3.500 0 0 1 5 1.500z" fill="none" stroke="#fff" stroke-width="2" stroke-linejoin="round"/><path d="M5.800 6.600h11M5.800 10.600h7" stroke="#fff" stroke-width="1.800" stroke-linecap="round"/></svg>
</div>
</body>
</html>
